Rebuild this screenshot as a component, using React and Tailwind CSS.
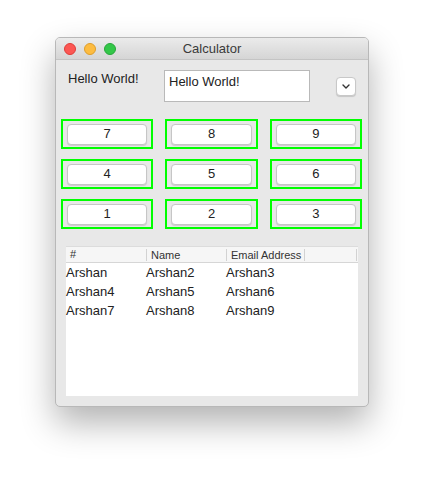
const rows = [
  ["Arshan", "Arshan2", "Arshan3"],
  ["Arshan4", "Arshan5", "Arshan6"],
  ["Arshan7", "Arshan8", "Arshan9"],
];

const keys = ["7", "8", "9", "4", "5", "6", "1", "2", "3"];

const App = () => {
  return (
    <div
      className="w-[424px] h-[480px] bg-white pt-[37px] pl-[55px]"
      style={{ fontFamily: "'Liberation Sans', Arial, sans-serif" }}
    >
      <div className="w-[314px] h-[370px] flex flex-col rounded-[5px] border border-[#b8b8b8] bg-[#e8e8e8] shadow-[0_16px_34px_rgba(0,0,0,0.3)] overflow-hidden">
        {/* title bar */}
        <div className="h-[22px] shrink-0 flex items-center relative bg-gradient-to-b from-[#ebebeb] to-[#d5d5d5] border-b border-[#c4c4c4]">
          <div className="flex items-center gap-[8px] pl-[8px]">
            <span className="w-[12px] h-[12px] rounded-full bg-[#fc5753] border border-[#df3d38]" />
            <span className="w-[12px] h-[12px] rounded-full bg-[#fdbc40] border border-[#de9e2a]" />
            <span className="w-[12px] h-[12px] rounded-full bg-[#33c748] border border-[#27a63a]" />
          </div>
          <div className="absolute inset-0 flex items-center justify-center text-[13px] text-[#3a3a3a]">
            Calculator
          </div>
        </div>

        {/* top row */}
        <div className="flex items-start pt-[10px] h-[42px] shrink-0">
          <div className="pl-[12px] w-[108px] pt-[1px] text-[13px] leading-[16px] text-[#222]">Hello World!</div>
          <div className="w-[146px] h-[32px] bg-white border border-[#b9b9b9] px-[4px] pt-[3px] text-[13px] leading-[16px] text-[#222]">
            Hello World!
          </div>
          <div className="ml-[26px] mt-[7px] w-[20px] h-[19px] rounded-[4px] bg-white border border-[#c8c8c8] shadow-[0_1px_1px_rgba(0,0,0,0.15)] flex items-center justify-center">
            <svg width="8" height="5" viewBox="0 0 8 5" fill="none">
              <path d="M1 1l3 3 3-3" stroke="#333" strokeWidth="1.4" strokeLinecap="round" strokeLinejoin="round" />
            </svg>
          </div>
        </div>

        {/* keypad */}
        <div className="mt-[17px] ml-[5px] w-[301px] grid grid-cols-3 gap-x-[12px] gap-y-[10px]">
          {keys.map((k) => (
            <div key={k} className="h-[30px] border-2 border-[#00ff00] flex items-center justify-center px-[4px]">
              <div className="w-full h-[21px] rounded-[4px] bg-white border border-[#c6c6c6] shadow-[0_1px_1px_rgba(0,0,0,0.12)] flex items-center justify-center text-[13px] text-[#222]">
                {k}
              </div>
            </div>
          ))}
        </div>

        {/* table */}
        <div className="mt-[17px] ml-[10px] w-[292px] h-[150px] bg-white">
          <div className="h-[17px] flex items-center bg-[#f6f6f6] border-t border-[#dcdcdc] border-b border-b-[#d6d6d6] text-[11px] text-[#333]">
            <div className="w-[80px] pl-[4px]">#</div>
            <div className="w-[80px] pl-[4px] border-l border-[#d2d2d2] leading-[12px]">Name</div>
            <div className="w-[79px] pl-[4px] border-l border-r border-[#d2d2d2] leading-[12px]">Email Address</div>
            <div className="flex-1" />
            <div className="w-[1px] h-[12px] bg-[#d2d2d2] mr-[1px]" />
          </div>
          <div>
            {rows.map((r) => (
              <div key={r[0]} className="h-[19px] flex items-center text-[13px] text-[#222]">
                <div className="w-[80px]">{r[0]}</div>
                <div className="w-[80px]">{r[1]}</div>
                <div className="w-[80px]">{r[2]}</div>
              </div>
            ))}
          </div>
        </div>
      </div>
    </div>
  );
};

export default App;
